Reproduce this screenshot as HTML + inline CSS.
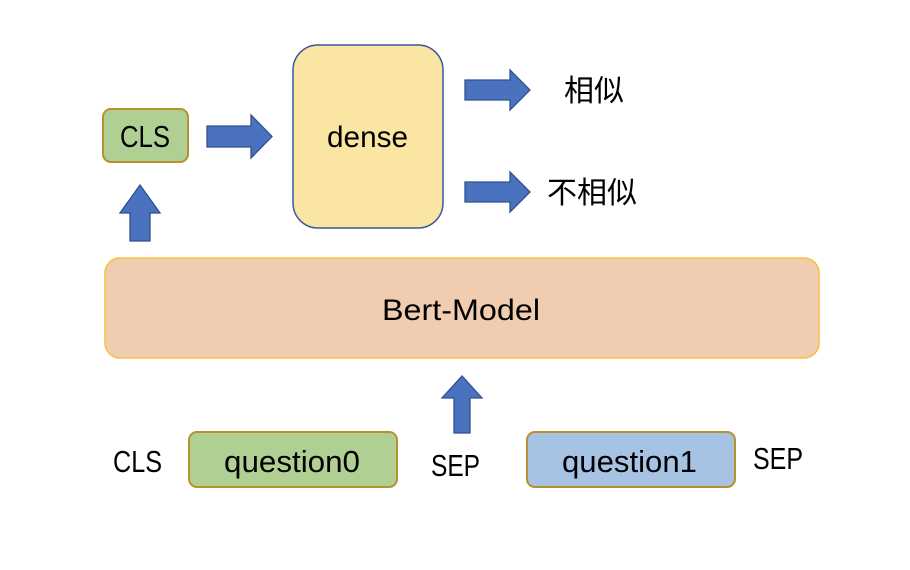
<!DOCTYPE html>
<html><head><meta charset="utf-8"><style>
html,body{margin:0;padding:0;background:#fff;width:910px;height:570px;overflow:hidden}
text{font-family:"Liberation Sans","Noto Sans CJK SC",sans-serif;fill:#000}
</style></head><body>
<svg width="910" height="570" xmlns="http://www.w3.org/2000/svg">
<g fill="#4a72be" stroke="#2f528f" stroke-width="1.3">
<path d="M207 126H251V115L272 136.5L251 158V147H207Z"/>
<path d="M465 80H510V70L530 90L510 110V100H465Z"/>
<path d="M465 182H510V172L530 192L510 212V202H465Z"/>
<path d="M130 241V213H120L140 185L160 213H150V241Z"/>
<path d="M454 433V398H442L462 376L482 398H470V433Z"/>
</g>
<rect x="103" y="109" width="85" height="53" rx="8" fill="#b0d093" stroke="#b8902e" stroke-width="2"/>
<text x="120" y="147" font-size="31" textLength="50" lengthAdjust="spacingAndGlyphs">CLS</text>
<rect x="293" y="45" width="150" height="183" rx="25" fill="#fbe5a3" stroke="#3a5a9a" stroke-width="1.5"/>
<text x="327" y="147" font-size="30" textLength="81" lengthAdjust="spacingAndGlyphs">dense</text>
<text x="564" y="101" font-size="30">相似</text>
<text x="547" y="203" font-size="30">不相似</text>
<rect x="105" y="258" width="714" height="100" rx="15" fill="#f0cdb0" stroke="#f3c040" stroke-width="1.5"/>
<text x="382" y="320" font-size="30" textLength="158" lengthAdjust="spacingAndGlyphs">Bert-Model</text>
<rect x="189" y="432" width="208" height="55" rx="8" fill="#b0d093" stroke="#b8902e" stroke-width="2"/>
<text x="224" y="472" font-size="31" textLength="136" lengthAdjust="spacingAndGlyphs">question0</text>
<rect x="527" y="432" width="208" height="55" rx="8" fill="#a7c3e3" stroke="#b8902e" stroke-width="2"/>
<text x="562" y="472" font-size="31" textLength="135" lengthAdjust="spacingAndGlyphs">question1</text>
<text x="113" y="472" font-size="31" textLength="49" lengthAdjust="spacingAndGlyphs">CLS</text>
<text x="431" y="476" font-size="31" textLength="49" lengthAdjust="spacingAndGlyphs">SEP</text>
<text x="753" y="469" font-size="31" textLength="50" lengthAdjust="spacingAndGlyphs">SEP</text>
</svg>
</body></html>
